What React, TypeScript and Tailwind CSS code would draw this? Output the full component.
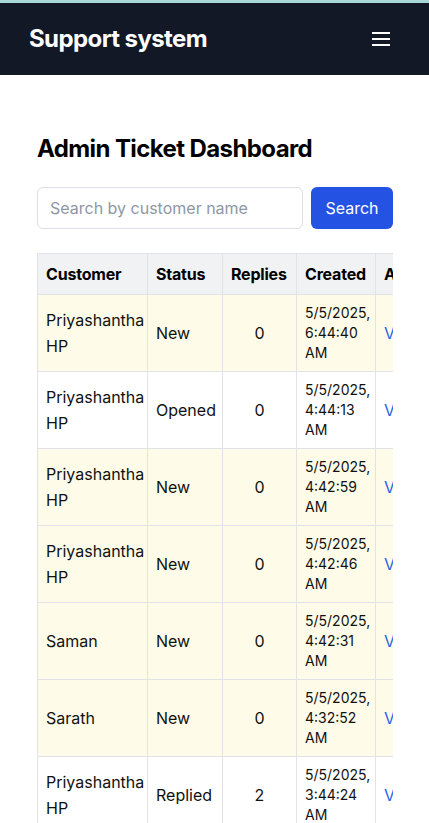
import React from 'react';

type Ticket = {
  id: number;
  customer: string;
  status: string;
  replies: number;
  date: string;
  time: string;
};

const tickets: Ticket[] = [
  { id: 1, customer: 'Priyashantha HP', status: 'New', replies: 0, date: '5/5/2025,', time: '6:44:40 AM' },
  { id: 2, customer: 'Priyashantha HP', status: 'Opened', replies: 0, date: '5/5/2025,', time: '4:44:13 AM' },
  { id: 3, customer: 'Priyashantha HP', status: 'New', replies: 0, date: '5/5/2025,', time: '4:42:59 AM' },
  { id: 4, customer: 'Priyashantha HP', status: 'New', replies: 0, date: '5/5/2025,', time: '4:42:46 AM' },
  { id: 5, customer: 'Saman', status: 'New', replies: 0, date: '5/5/2025,', time: '4:42:31 AM' },
  { id: 6, customer: 'Sarath', status: 'New', replies: 0, date: '5/5/2025,', time: '4:32:52 AM' },
  { id: 7, customer: 'Priyashantha HP', status: 'Replied', replies: 2, date: '5/5/2025,', time: '3:44:24 AM' },
  { id: 8, customer: 'Priyashantha HP', status: 'Opened', replies: 1, date: '5/5/2025,', time: '3:12:08 AM' },
];

const Navbar: React.FC = () => (
  <nav className="bg-[#121826] border-t-[3px] border-[#a9d6d6] h-[75px] flex items-center justify-between pl-[29px] pr-[39px]">
    <h1 className="text-white text-2xl font-bold tracking-[-0.6px]">Support system</h1>
    <button className="text-white" aria-label="menu">
      <svg width="18" height="14" viewBox="0 0 18 14" fill="currentColor">
        <rect x="0" y="0" width="18" height="2" />
        <rect x="0" y="6" width="18" height="2" />
        <rect x="0" y="12" width="18" height="2" />
      </svg>
    </button>
  </nav>
);

const App: React.FC = () => {
  return (
    <div className="h-screen overflow-hidden bg-white text-[#111] font-['Inter','Noto_Sans',sans-serif]">
      <Navbar />

      <main className="pl-[37px] pr-9 pt-[58px]">
        <h2 className="text-2xl font-bold text-black mb-[22px] tracking-[-0.6px]">Admin Ticket Dashboard</h2>

        <div className="flex gap-2 mb-6">
          <input
            type="text"
            placeholder="Search by customer name"
            className="flex-1 min-w-0 h-[42px] border border-[#dcdfe4] rounded-md px-3 text-base placeholder:text-[#8e97a6] outline-none"
          />
          <button className="w-[82px] h-[42px] bg-[#2453e3] text-white rounded-md text-base">Search</button>
        </div>

        <div className="overflow-hidden">
          <table className="table-fixed w-[430px] border-collapse text-base">
            <colgroup>
              <col className="w-[110px]" />
              <col className="w-[75px]" />
              <col className="w-[74px]" />
              <col className="w-[79px]" />
              <col className="w-[92px]" />
            </colgroup>
            <thead>
              <tr className="bg-[#f1f2f4]">
                <th className="border border-[#e1e3e8] px-2 h-[41px] text-left font-bold text-black tracking-[-0.2px]">Customer</th>
                <th className="border border-[#e1e3e8] px-2 text-left font-bold text-black tracking-[-0.2px]">Status</th>
                <th className="border border-[#e1e3e8] px-2 text-left font-bold text-black tracking-[-0.2px]">Replies</th>
                <th className="border border-[#e1e3e8] px-2 text-left font-bold text-black tracking-[-0.2px]">Created</th>
                <th className="border border-[#e1e3e8] px-2 text-left font-bold text-black tracking-[-0.2px]">Actions</th>
              </tr>
            </thead>
            <tbody>
              {tickets.map((t) => (
                <tr key={t.id} className={t.status === 'New' ? 'bg-[#fefce8]' : 'bg-white'}>
                  <td className="border border-[#e1e3e8] px-2 py-2 leading-[26px] align-middle">{t.customer}</td>
                  <td className="border border-[#e1e3e8] px-2 py-2 align-middle">{t.status}</td>
                  <td className="border border-[#e1e3e8] px-2 py-2 text-center align-middle">{t.replies}</td>
                  <td className="border border-[#e1e3e8] px-2 py-2 text-sm leading-5 align-middle">
                    {t.date} {t.time}
                  </td>
                  <td className="border border-[#e1e3e8] px-2 py-2 align-middle">
                    <a href="#" className="text-[#2563eb]">View</a>
                  </td>
                </tr>
              ))}
            </tbody>
          </table>
        </div>
      </main>
    </div>
  );
};

export default App;
